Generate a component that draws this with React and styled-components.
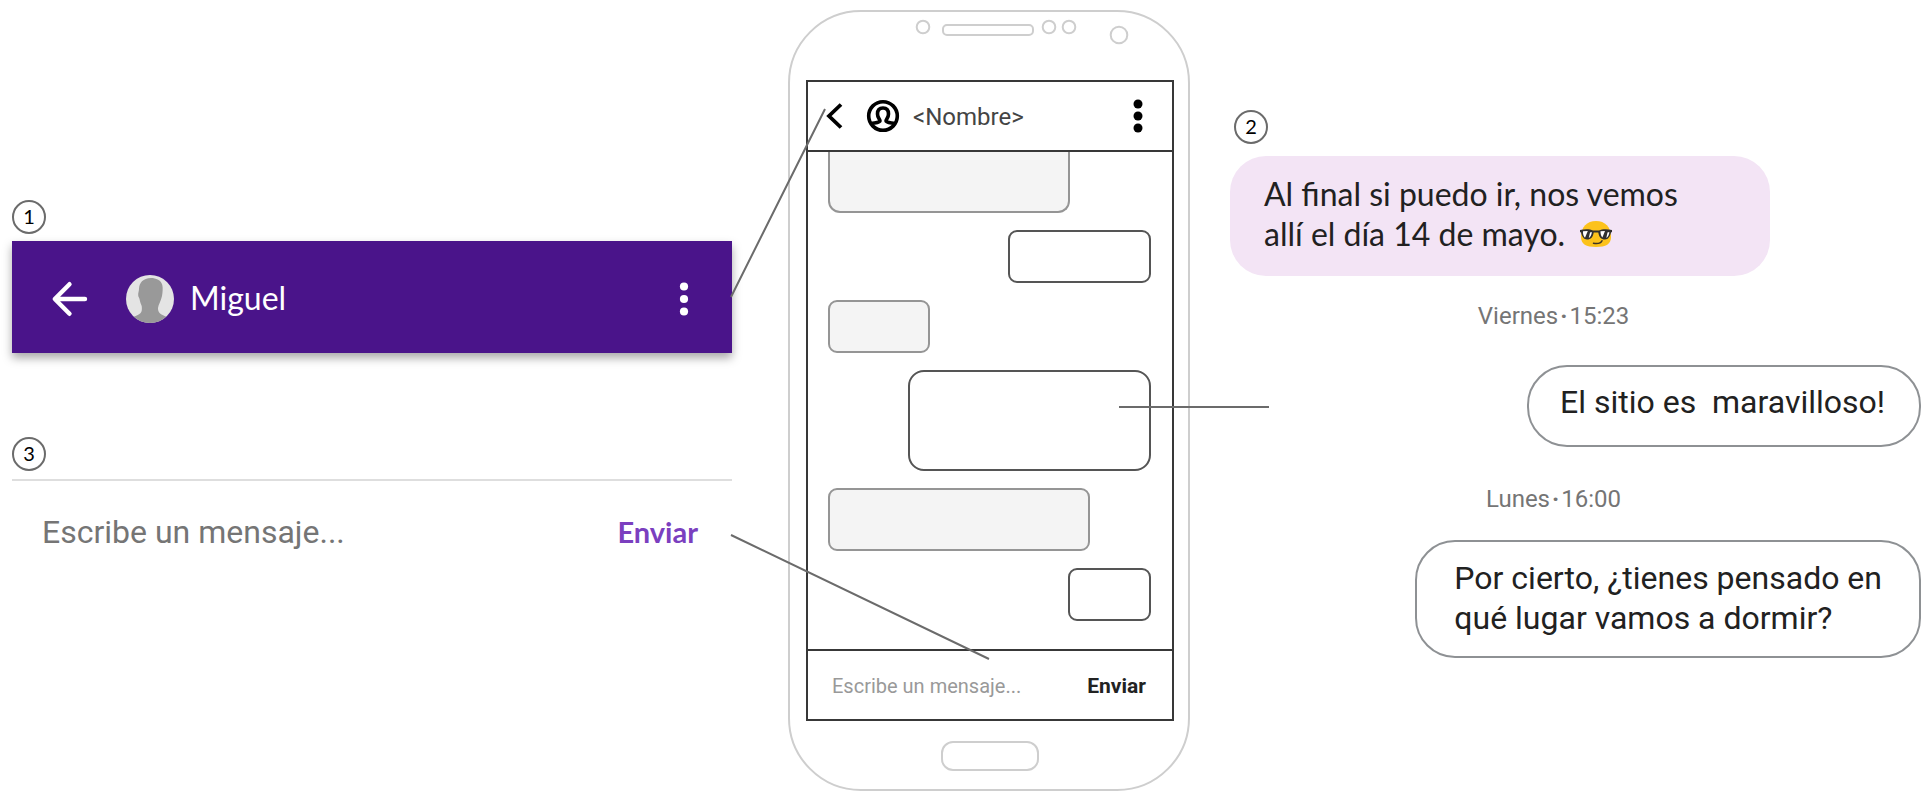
import React from "react";
import styled, { createGlobalStyle } from "styled-components";

const GlobalStyle = createGlobalStyle`
  *, *::before, *::after { box-sizing: border-box; }
  body {
    margin: 0;
    background: #fff;
    color: #212121;
    font-family: Roboto, "Liberation Sans", sans-serif;
  }
  button, input { font: inherit; }
`;

const rounded = `Lato, "Open Sans", sans-serif`;

const Page = styled.main`
  display: grid;
  grid-template-columns: minmax(0, 720fr) 56px 402px 40px minmax(0, 691fr);
  align-items: start;
  padding: 10px 0 12px 12px;
`;

const LeftColumn = styled.div`
  grid-column: 1;
  padding-top: 190px;
`;

const RightColumn = styled.div`
  grid-column: 5;
  display: flex;
  flex-direction: column;
  align-items: flex-end;
  padding-top: 100px;
`;

const Badge = styled.span`
  display: flex;
  align-items: center;
  justify-content: center;
  width: 34px;
  height: 34px;
  padding-bottom: 2px;
  border: 2px solid #6b6b6b;
  border-radius: 50%;
  color: #000;
  font: 400 20px/20px ${rounded};
`;

const BadgeRow = styled.div`
  align-self: stretch;
  padding-left: 4px;
  margin-bottom: 12px;
`;

const IconButton = styled.button`
  display: flex;
  padding: 0;
  border: 0;
  background: none;
  color: inherit;
`;

const AppBar = styled.header`
  display: flex;
  align-items: center;
  height: 112px;
  margin: 7px 0 84px;
  padding: 4px 42px 0 28px;
  background: #4a148a;
  color: #fff;
  box-shadow: 0 5px 9px rgba(0, 0, 0, 0.34);
`;

const Avatar = styled.svg`
  display: block;
  margin: 0 16px 0 38px;
`;

const ContactName = styled.h1`
  flex: 1;
  margin: 0;
  padding-bottom: 2px;
  font: 400 32px/40px ${rounded};
`;

const Composer = styled.form`
  display: flex;
  align-items: center;
  height: 104px;
  margin-top: 8px;
  padding: 0 34px 0 30px;
  border-top: 2px solid #dedede;
`;

const MessageInput = styled.input`
  flex: 1;
  min-width: 0;
  padding: 0;
  border: 0;
  outline: 0;
  background: none;
  font-size: ${(p) => (p.$small ? 20 : 32)}px;
  line-height: ${(p) => (p.$small ? 24 : 40)}px;
  &::placeholder { color: ${(p) => (p.$small ? "#999" : "#757575")}; opacity: 1; }
`;

const SendButton = styled.button`
  padding: 0;
  border: 0;
  background: none;
  color: ${(p) => (p.$small ? "#222" : "#7b3fbf")};
  font: 700 ${(p) => (p.$small ? 21 : 29)}px/32px ${(p) => (p.$small ? "Roboto, sans-serif" : rounded)};
`;

const Bubble = styled.p`
  align-self: ${(p) => (p.$incoming ? "flex-start" : "flex-end")};
  margin: 0;
  font-size: 32px;
  line-height: 40px;
  border-radius: 40px;
  color: #212121;
`;

const IncomingBubble = styled(Bubble)`
  width: 540px;
  max-width: 100%;
  padding: 18px 34px 22px;
  background: #f3e4f5;
  font-family: ${rounded};
  border-radius: 36px;
`;

const OutgoingBubble = styled(Bubble)`
  padding: ${(p) => (p.$tall ? "16px 37px 18px" : "15px 34px 23px 31px")};
  border: 2px solid #8e9194;
  white-space: pre-wrap;
`;

const Emoji = styled.svg`
  display: inline-block;
  vertical-align: -1px;
  margin-left: 7px;
`;

const Stamp = styled.time`
  align-self: stretch;
  padding-right: 44px;
  margin: ${(p) => p.$margin};
  text-align: center;
  color: #757575;
  font-size: 24px;
  line-height: 32px;
`;

const Dot = styled.b`
  margin: 0 2px;
`;

const Phone = styled.section`
  position: relative;
  grid-column: 3;
  padding: 0 14px 0 16px;
  border: 2px solid #cecece;
  border-radius: 73px;
`;

const Sensors = styled.svg`
  display: block;
  margin: 0 auto;
`;

const Screen = styled.div`
  border: 2px solid #383838;
`;

const PhoneHeader = styled.div`
  display: flex;
  align-items: center;
  height: 70px;
  padding: 0 29px 0 17px;
  border-bottom: 2px solid #383838;
  color: #000;
`;

const PhoneAvatar = styled.svg`
  display: block;
  margin: 0 13px 0 23px;
`;

const PhoneName = styled.span`
  flex: 1;
  padding-top: 2px;
  color: #444;
  font-size: 24px;
  line-height: 32px;
`;

const Conversation = styled.div`
  display: flex;
  flex-direction: column;
  gap: 17px;
  padding: 0 21px 28px 20px;
`;

const WireBubble = styled.div`
  align-self: ${(p) => (p.$own ? "flex-end" : "flex-start")};
  width: ${(p) => p.$w}px;
  height: ${(p) => p.$h}px;
  border: 2px solid ${(p) => (p.$own ? "#555" : "#959595")};
  border-top-width: ${(p) => (p.$cut ? 0 : 2)}px;
  border-radius: ${(p) => (p.$cut ? "0 0 12px 12px" : `${p.$r || 9}px`)};
  background: ${(p) => (p.$own ? "#fff" : "#f4f4f4")};
`;

const PhoneComposer = styled.form`
  display: flex;
  align-items: center;
  height: 70px;
  padding: 2px 26px 0 24px;
  border-top: 2px solid #383838;
`;

const HomeButton = styled.div`
  width: 98px;
  height: 30px;
  margin: 20px auto 18px;
  border: 2px solid #cecece;
  border-radius: 12px;
`;

const Connectors = styled.svg`
  position: absolute;
  top: -12px;
  left: -58px;
  overflow: visible;
  pointer-events: none;
`;

function Kebab({ width, height, r, gap }) {
  const c = height / 2;
  return (
    <svg width={width} height={height} fill="currentColor" aria-hidden="true">
      <circle cx={width / 2} cy={c - gap} r={r} />
      <circle cx={width / 2} cy={c} r={r} />
      <circle cx={width / 2} cy={c + gap} r={r} />
    </svg>
  );
}

function SunglassesEmoji() {
  return (
    <Emoji width="32" height="26" viewBox="0 0 32 26" role="img" aria-label="😎">
      <path d="M1 16C1 6 7 0 16 0s15 6 15 16c0 7-5 10-15 10S1 23 1 16Z" fill="#fcc21b" />
      <path d="M0 9c5-1 10-1 13 .6h6C22 8 27 8 32 9v2l-1 .6C30 16 28 18.500 25 18.500c-4 0-6-2.500-6.700-7h-4.600c-.7 4.500-2.700 7-6.700 7-3 0-5-2.500-6-6.900L0 11Z" fill="#2f2f2f" />
      <path d="M3 10.300 7.800 10 5 16.800C3.500 15.500 2.800 13 3 10.300ZM10 11.500 11.800 11c0 2.500-1.200 5-3 6ZM20.500 10.300 25 10l-2.600 6.600c-1.400-1.500-2-3.800-1.900-6.300ZM27.500 11.500 29.300 11c0 2.500-1.200 5-3 6Z" fill="#fff" />
      <path d="M13.500 22.300c4 .6 7.500-.2 8.500-2.500" fill="none" stroke="#3c3426" strokeWidth="1.500" strokeLinecap="round" />
    </Emoji>
  );
}

export default function App() {
  return (
    <>
      <GlobalStyle />
      <Page>
        <LeftColumn>
          <Badge>1</Badge>
          <AppBar>
            <IconButton type="button" aria-label="Volver">
              <svg width="48" height="48" viewBox="0 0 48 48" fill="none" stroke="currentColor" strokeWidth="4.4" strokeLinecap="round" strokeLinejoin="round" aria-hidden="true">
                <path d="M45 24H15M29.500 9.200 14.800 24l14.700 14.800" />
              </svg>
            </IconButton>
            <Avatar width="48" height="48" viewBox="0 0 48 48" aria-hidden="true">
              <defs>
                <clipPath id="avatar-clip"><circle cx="24" cy="24" r="24" /></clipPath>
              </defs>
              <g clipPath="url(#avatar-clip)">
                <rect width="48" height="48" fill="#e4e4e4" />
                <path d="M25 3C17 3 13 8 13 14c0 2-1 4-.8 6 0 2 .8 2 1.300 4 .5 3 1.500 5 2.200 7C16.500 38 15 39 7 42v6h34v-6c-7-3-9-4-9-9 .3-3 3-7 4-12 .7-4 1-8 .3-11C35 5 30 3 25 3Z" fill="#999" />
              </g>
            </Avatar>
            <ContactName>Miguel</ContactName>
            <IconButton type="button" aria-label="Más opciones">
              <Kebab width={12} height={36} r={4.1} gap={12.5} />
            </IconButton>
          </AppBar>
          <Badge>3</Badge>
          <Composer onSubmit={(e) => e.preventDefault()}>
            <MessageInput aria-label="Mensaje" placeholder="Escribe un mensaje..." />
            <SendButton type="submit">Enviar</SendButton>
          </Composer>
        </LeftColumn>

        <Phone>
          <Sensors width="300" height="68" viewBox="840 12 300 68" fill="none" stroke="#cecece" strokeWidth="2" aria-hidden="true">
            <circle cx="923" cy="27" r="6.300" />
            <rect x="943" y="25" width="90" height="10" rx="4" />
            <circle cx="1049" cy="27" r="6.300" />
            <circle cx="1069" cy="27" r="6.300" />
            <circle cx="1119" cy="35" r="8.300" />
          </Sensors>
          <Screen>
            <PhoneHeader>
              <IconButton type="button" aria-label="Volver">
                <svg width="18" height="28" viewBox="0 0 18 28" fill="none" stroke="currentColor" strokeWidth="3.800" aria-hidden="true">
                  <path d="M16 2.500 4 14l12 11.500" />
                </svg>
              </IconButton>
              <PhoneAvatar width="34" height="34" viewBox="0 0 34 34" fill="none" stroke="currentColor" strokeWidth="3.600" aria-hidden="true">
                <circle cx="17" cy="17" r="14.300" />
                <path d="M5 24.500c4-.8 9-.8 9-2.500 0-2-2.500-3-2.500-7 0-4 2-6 5.500-6s5.500 2 5.500 6c0 4-2.500 5-2.500 7 0 1.700 5 1.700 9 2.500" />
              </PhoneAvatar>
              <PhoneName>&lt;Nombre&gt;</PhoneName>
              <IconButton type="button" aria-label="Más opciones">
                <Kebab width={10} height={34} r={4.5} gap={12} />
              </IconButton>
            </PhoneHeader>
            <Conversation>
              <WireBubble $w={242} $h={61} $cut />
              <WireBubble $own $w={143} $h={53} />
              <WireBubble $w={102} $h={53} />
              <WireBubble $own $w={243} $h={101} $r={16} />
              <WireBubble $w={262} $h={63} />
              <WireBubble $own $w={83} $h={53} />
            </Conversation>
            <PhoneComposer onSubmit={(e) => e.preventDefault()}>
              <MessageInput $small aria-label="Mensaje" placeholder="Escribe un mensaje..." />
              <SendButton $small type="submit">Enviar</SendButton>
            </PhoneComposer>
          </Screen>
          <HomeButton />
          <Connectors width="540" height="780" viewBox="732 0 540 780" stroke="#6b6b6b" strokeWidth="2" aria-hidden="true">
            <path d="M731 297 825 109M1119 407H1269M731 535 989 659" fill="none" />
          </Connectors>
        </Phone>

        <RightColumn>
          <BadgeRow><Badge>2</Badge></BadgeRow>
          <IncomingBubble $incoming>
            Al final si puedo ir, nos vemos<br />
            allí el día 14 de mayo. <SunglassesEmoji />
          </IncomingBubble>
          <Stamp $margin="24px 0 33px">Viernes<Dot>·</Dot>15:23</Stamp>
          <OutgoingBubble>{"El sitio es  maravilloso!"}</OutgoingBubble>
          <Stamp $margin="36px 0 25px">Lunes<Dot>·</Dot>16:00</Stamp>
          <OutgoingBubble $tall>
            Por cierto, ¿tienes pensado en{"\n"}qué lugar vamos a dormir?
          </OutgoingBubble>
        </RightColumn>
      </Page>
    </>
  );
}
